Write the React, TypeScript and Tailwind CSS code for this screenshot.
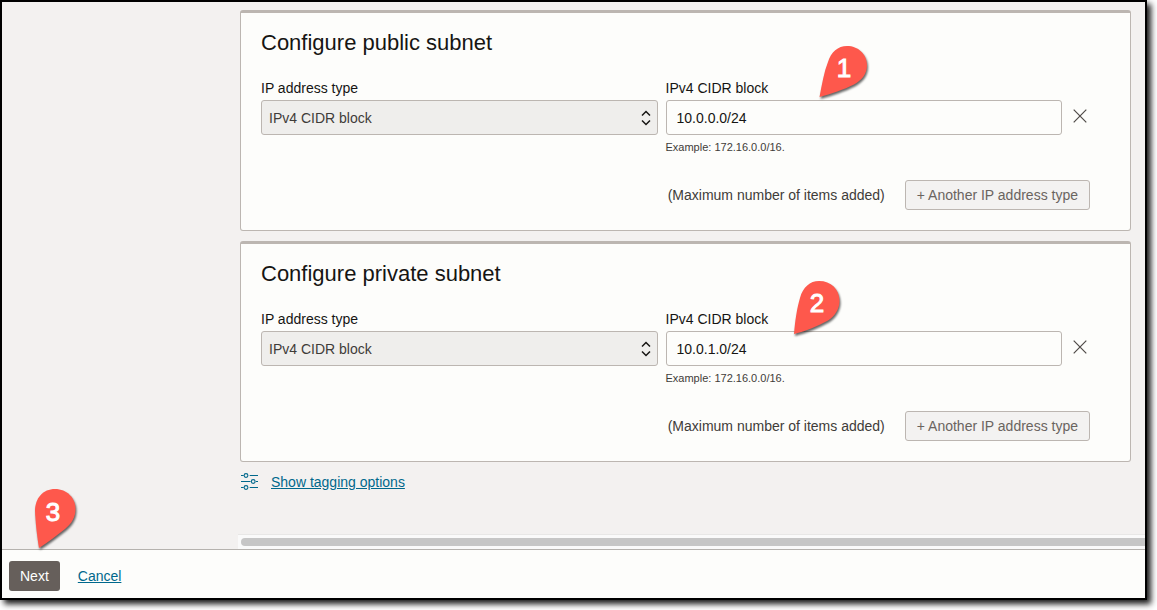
import React from 'react';

interface CalloutProps {
  label: string;
  shape: string;
  className: string;
  textX: number;
  textY: number;
}

const Callout: React.FC<CalloutProps> = ({ label, shape, className, textX, textY }) => (
  <svg
    width="60"
    height="68"
    viewBox="0 0 60 68"
    aria-hidden="true"
    className={`pointer-events-none absolute z-10 ${className}`}
  >
    <path d={shape} fill="#fe584c" className="drop-shadow-[1px_2px_1px_rgba(0,0,0,0.6)]" />
    <text x={textX} y={textY} textAnchor="middle" fill="#fff" stroke="#fff" strokeWidth="1" className="text-[26px]">
      {label}
    </text>
  </svg>
);

const CloseIcon = () => (
  <svg width="14" height="14" viewBox="0 0 14 14" fill="none" stroke="#4f4a47" strokeWidth="1.2">
    <path d="M0.7 0.7L13.3 13.3M13.3 0.7L0.7 13.3" />
  </svg>
);

const SelectArrows = () => (
  <svg
    width="10"
    height="16"
    viewBox="0 0 10 16"
    fill="none"
    stroke="#161513"
    strokeWidth="1.5"
    className="pointer-events-none absolute right-[7px] top-[10px]"
  >
    <path d="M1 5.5L5 1.5L9 5.5M1 10.5L5 14.5L9 10.5" />
  </svg>
);

const TaggingIcon = () => (
  <svg width="18" height="18" viewBox="0 0 18 18" fill="none" stroke="#00688c" strokeWidth="1.1">
    <path d="M0 2.5H2.7M8.7 2.5H17M0 8.5H9.5M15 8.5H17M0 14.5H2.7M8.7 14.5H17" />
    <circle cx="5" cy="2.5" r="1.9" />
    <circle cx="12.2" cy="8.5" r="1.9" />
    <circle cx="5" cy="14.5" r="1.9" />
  </svg>
);

interface SubnetCardProps {
  id: string;
  title: string;
  cidr: string;
  children: React.ReactNode;
}

const SubnetCard: React.FC<SubnetCardProps> = ({ id, title, cidr, children }) => (
  <section className="rounded-[3px] border border-t-3 border-[#bcb6b1] bg-[#fdfdfb] pt-4 pr-10 pb-5 pl-5">
    <h2 className="text-[22px] leading-7">{title}</h2>

    <div className="mt-[21px] flex gap-2">
      <div className="flex-1">
        <label htmlFor={`${id}-type`} className="mb-[2px] block leading-5">IP address type</label>
        <div className="relative">
          <select
            id={`${id}-type`}
            className="block h-[35px] w-full appearance-none rounded-[3px] border border-[#bcb6b1] bg-[#efeeec] px-[7px] pt-px text-[#3f3c39]"
          >
            <option>IPv4 CIDR block</option>
          </select>
          <SelectArrows />
        </div>
      </div>

      <div className="relative flex-1">
        <label htmlFor={`${id}-cidr`} className="mb-[2px] block leading-5">IPv4 CIDR block</label>
        <input
          id={`${id}-cidr`}
          type="text"
          defaultValue={cidr}
          className="block h-[35px] w-full rounded-[3px] border border-[#bcb6b1] bg-[#fdfdfb] px-[10px]"
        />
        <p className="mt-[2px] text-[11px] leading-5 text-[#3f3c39]">Example: 172.16.0.0/16.</p>
        {children}
      </div>

      <button type="button" aria-label="Remove" className="mt-[22px] flex h-8 w-5 items-center justify-center">
        <CloseIcon />
      </button>
    </div>

    <div className="mt-[23px] flex items-center justify-end gap-5 text-[#3f3c39]">
      <span>(Maximum number of items added)</span>
      <button
        type="button"
        disabled
        className="h-[30px] rounded-[3px] border border-[#bcb6b1] bg-[#f3f2f1] px-[11px] text-[#6a6460]"
      >
        + Another IP address type
      </button>
    </div>
  </section>
);

export default function App() {
  return (
    <div className="flex min-h-screen bg-white pr-[10px] pb-[10px] font-['Liberation_Sans',Arial,sans-serif] text-[14px] text-[#161513]">
      <div className="flex min-w-0 flex-1 flex-col border-2 border-black bg-[#f3f1f0] shadow-[4px_4px_6px_rgba(0,0,0,0.9)]">
        <div className="flex flex-1">
          <aside className="w-[236px] shrink-0" />
          <main className="flex min-w-0 flex-1 flex-col justify-between">
            <div className="flex flex-col gap-[10px] pt-2 pr-[14px] pl-[2px]">
              <SubnetCard id="public" title="Configure public subnet" cidr="10.0.0.0/24">
                <Callout
                  label="1"
                  className="left-[147px] top-[-38px]"
                  shape="M6.500 57C9 44 11 32 15 22C18 12 25 6 34 6C45 6 54 14 54 25C54 34 49 40 41 44.500C31 49.500 18 54 6.500 57Z"
                  textX={31}
                  textY={37}
                />
              </SubnetCard>
              <SubnetCard id="private" title="Configure private subnet" cidr="10.0.1.0/24">
                <Callout
                  label="2"
                  className="left-[122px] top-[-33px]"
                  shape="M6 58C7 45 9 32 12 22C15 11 22 5 31 5C43 5 51.500 13 51.500 25C51.500 33 47 40 40 44.500C30 50 18 55 6 58Z"
                  textX={29}
                  textY={36}
                />
              </SubnetCard>
              <div className="flex items-center gap-3 pl-px">
                <TaggingIcon />
                <a href="#tags" className="leading-5 text-[#00688c] underline">Show tagging options</a>
              </div>
            </div>
            <div className="border-t border-[#e8e7e6] bg-[#fafafa] pt-[3px] pb-[3px] pl-[3px]">
              <div className="h-2 rounded-l-full bg-[#c6c6c6]" />
            </div>
          </main>
        </div>

        <footer className="relative flex items-center gap-[18px] border-t border-[#b5b2ae] bg-[#fdfdfb] px-[7px] pt-[11px] pb-[7px]">
          <button type="button" className="h-[30px] rounded-[3px] bg-[#665f5b] px-[11px] text-white">Next</button>
          <a href="#cancel" className="text-[#00688c] underline">Cancel</a>
          <Callout
            label="3"
            className="left-[28px] top-[-64px]"
            shape="M9 62C7 50 5.500 36 5 25C5 12 13 3 25 3C37 3 45.500 12 45.500 23C45.500 31 42 37 35 43C27 49.500 18 56 9 62Z"
            textX={23}
            textY={35}
          />
        </footer>
      </div>
    </div>
  );
}
